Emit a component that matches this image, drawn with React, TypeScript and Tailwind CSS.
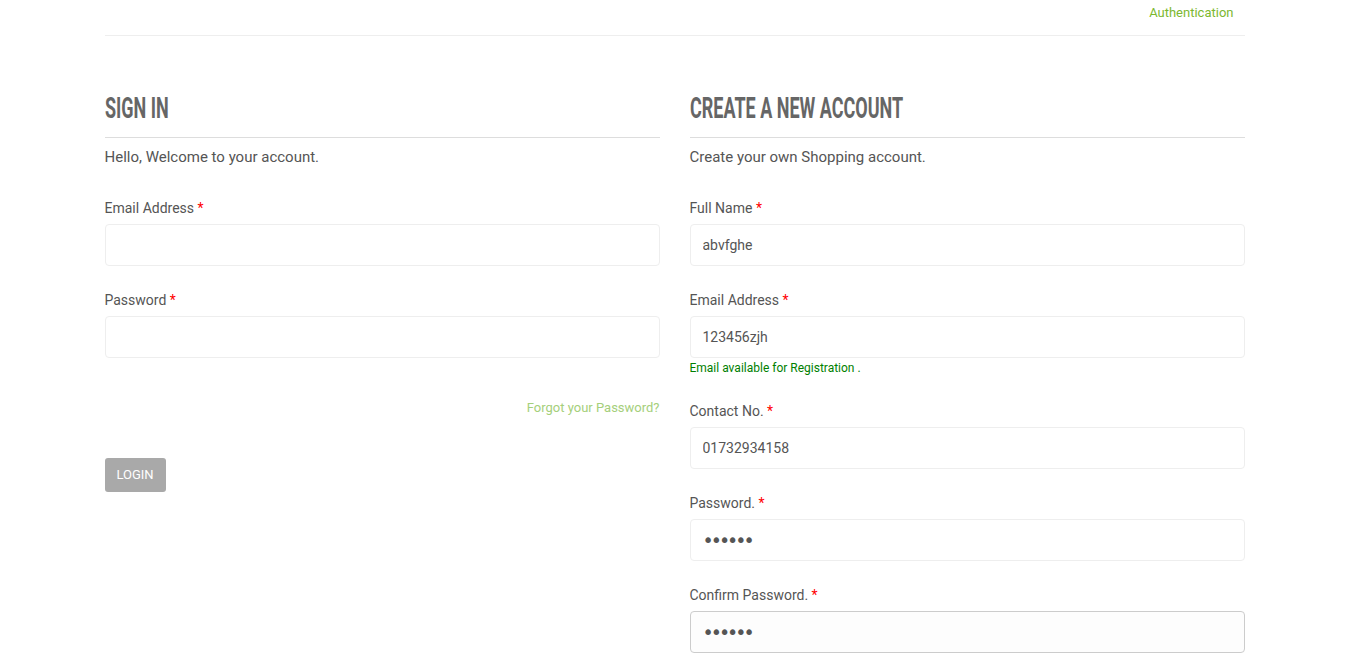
import React from 'react';

const heading = "pb-[7px] border-b border-[#ddd] text-[#666] uppercase leading-[34px]";
const headText = "inline-block origin-left scale-x-[0.6] font-['Roboto',sans-serif] font-bold text-[30px] whitespace-nowrap";

function Field({ label, value, type = 'text', focused = false, note }: { label: string; value?: string; type?: string; focused?: boolean; note?: string }) {
  return (
    <div className={note ? 'mb-[26px]' : 'mb-6'}>
      <label className="block text-sm leading-5 text-[#555] mb-[6px]">
        {label} <span className="text-[#f00]">*</span>
      </label>
      <input
        type={type}
        readOnly
        value={value ?? ''}
        className={
          'block w-full h-[42px] rounded-[4px] border px-[12px] text-[#555] outline-none ' +
          (type === 'password' ? "font-['DejaVu_Sans',sans-serif] text-[19px] tracking-[-3px] " : 'text-sm ') +
          (focused ? 'border-[#ccc] bg-[#fdfdfd]' : 'border-[#eee] bg-white')
        }
      />
      {note && <p className="mt-[3px] text-xs leading-[14px] text-[#008000]">{note}</p>}
    </div>
  );
}

export default function App() {
  return (
    <div className="w-[1349px] bg-white font-['Roboto',sans-serif] text-[#555]">
      <div className="mx-auto w-[1140px]">
        <div className="h-[36px] border-b border-[#eee] flex justify-end pr-[11px] pt-[5px]">
          <a className="text-[13px] leading-4 text-[#7cb82f]">Authentication</a>
        </div>

        <div className="grid grid-cols-2 gap-[30px] pt-[55px]">
          {/* sign in */}
          <div>
            <h2 className={heading}><span className={headText}>Sign in</span></h2>
            <p className="mt-[9px] text-[15px] leading-5 mb-[31px]">Hello, Welcome to your account.</p>
            <Field label="Email Address" type="email" />
            <Field label="Password" type="password" />
            <div className="flex justify-end mt-[41px]">
              <a className="text-[13px] leading-[18px] text-[#a5cf7b]">Forgot your Password?</a>
            </div>
            <button className="mt-[41px] h-[34px] w-[61px] rounded-[3px] bg-[#a9a9a9] text-[13px] text-white uppercase">
              Login
            </button>
          </div>

          {/* register */}
          <div>
            <h2 className={heading}><span className={headText}>Create a new account</span></h2>
            <p className="mt-[9px] text-[15px] leading-5 mb-[31px]">Create your own Shopping account.</p>
            <Field label="Full Name" value="abvfghe" />
            <Field label="Email Address" value="123456zjh" note="Email available for Registration ." />
            <Field label="Contact No." value="01732934158" />
            <Field label="Password." type="password" value="123456" />
            <Field label="Confirm Password." type="password" value="123456" focused />
          </div>
        </div>
      </div>
    </div>
  );
}
